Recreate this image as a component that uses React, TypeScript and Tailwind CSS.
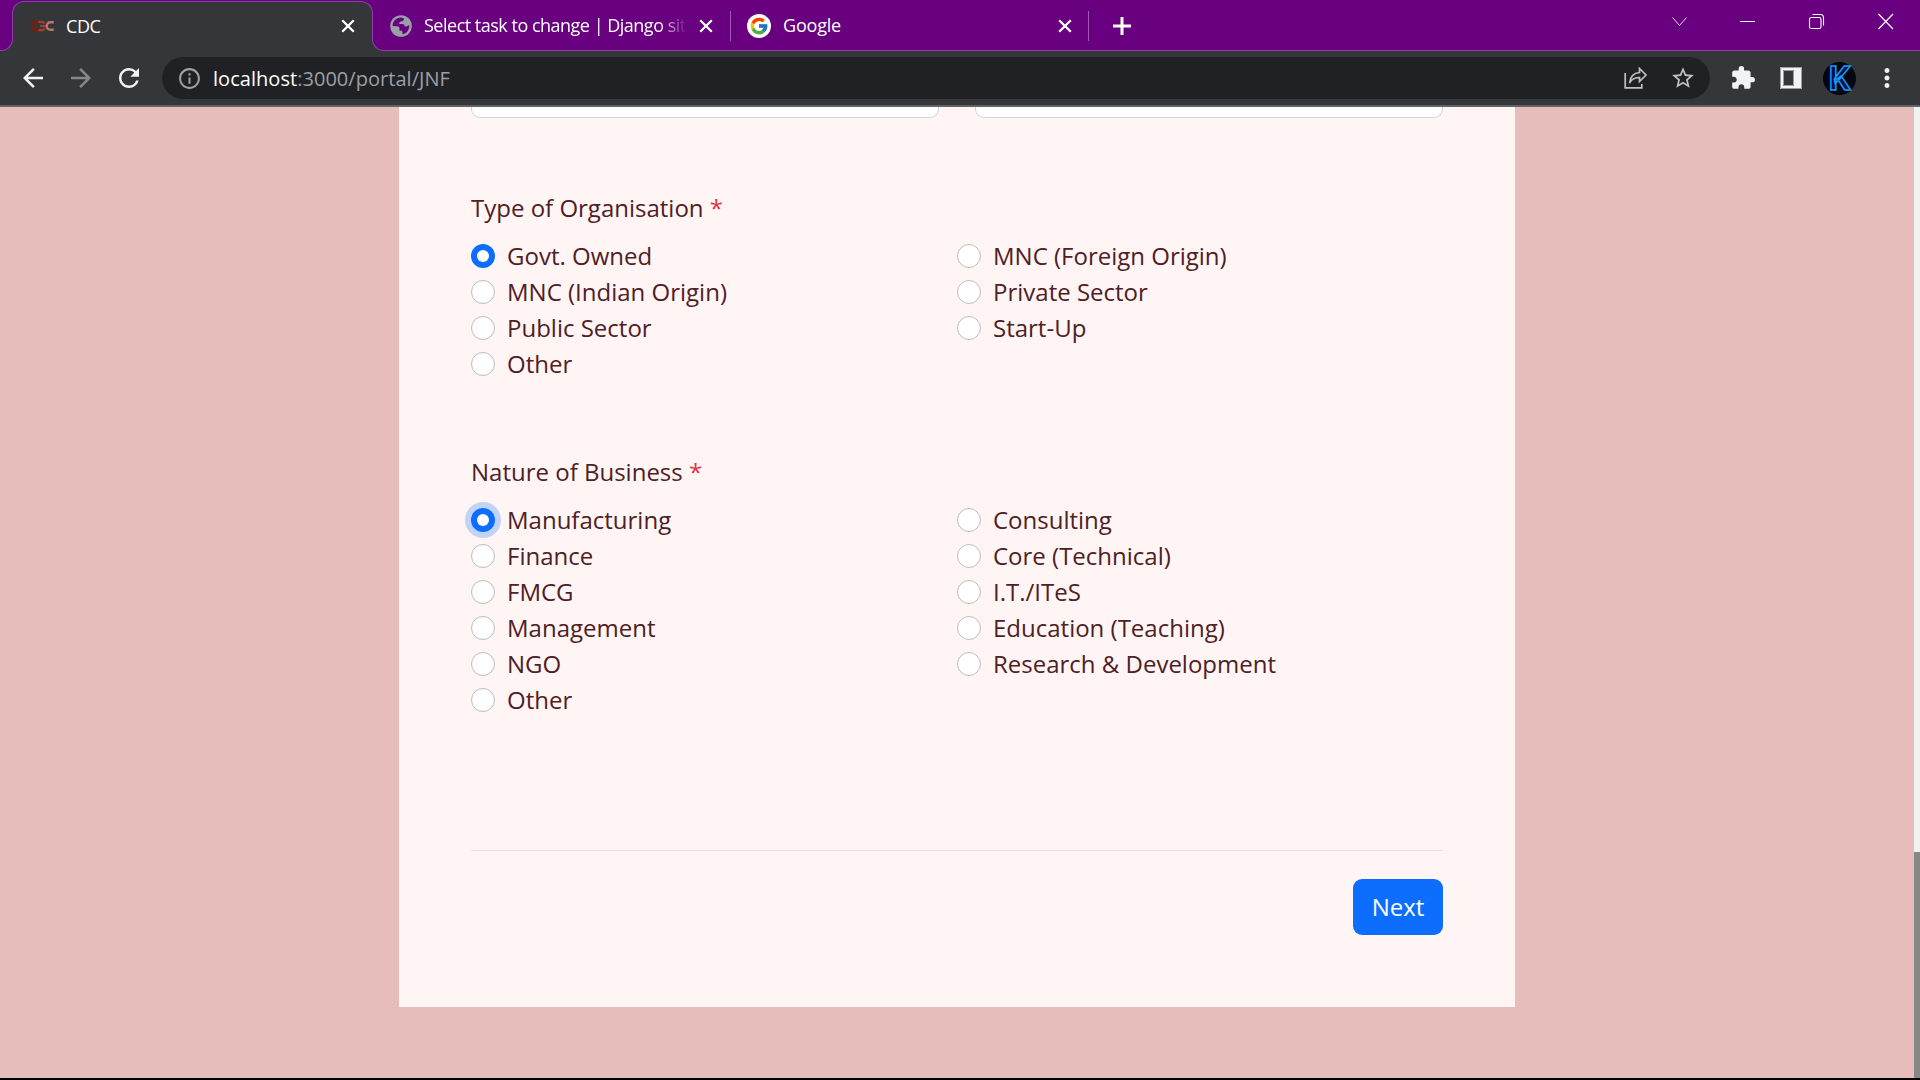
import { MdArrowBack, MdArrowForward, MdRefresh, MdInfoOutline, MdStarBorder, MdExtension, MdMoreVert } from "react-icons/md";
import { FcGoogle } from "react-icons/fc";

const organisationTypes = [
  "Govt. Owned",
  "MNC (Foreign Origin)",
  "MNC (Indian Origin)",
  "Private Sector",
  "Public Sector",
  "Start-Up",
  "Other",
];

const businessTypes = [
  "Manufacturing",
  "Consulting",
  "Finance",
  "Core (Technical)",
  "FMCG",
  "I.T./ITeS",
  "Management",
  "Education (Teaching)",
  "NGO",
  "Research & Development",
  "Other",
];

function CloseIcon() {
  return (
    <svg width="14" height="14" viewBox="0 0 14 14" fill="none" stroke="#fff" strokeWidth="2.3" className="shrink-0">
      <path d="M1.2 1.2 12.8 12.8M12.8 1.2 1.2 12.8" />
    </svg>
  );
}

function ChainFavicon() {
  return (
    <svg width="24" height="12" viewBox="0 0 24 12" fill="none" className="shrink-0">
      <path d="M9.500 3.200A4.200 4.300 0 1 0 9.500 8.800" stroke="#7c1c06" strokeWidth="2.800" />
      <path d="M8.500 1.800h3.500a3 3 0 0 1 2.500 1.700M8.500 10.200h3.500a3 3 0 0 0 2.500-1.700M10 6h5.500" stroke="#a3402c" strokeWidth="2.200" />
      <path d="M23.800 2.200H20.500A3.800 3.800 0 0 0 20.500 9.800H23.800" stroke="#b9766a" strokeWidth="2.500" />
    </svg>
  );
}

function GlobeIcon() {
  return (
    <svg width="22" height="22" viewBox="0 0 22 22" className="shrink-0">
      <circle cx="11" cy="11" r="10.800" fill="#9aa0a6" />
      <path
        fill="#680080"
        d="M2.600 11C2.600 6.300 6.200 2.700 11 2.600L14 3.200C14 5 13 6.300 11 6.500C9.500 6.700 9.300 7.500 9.300 9H12.500C14 9 14.700 10 14.700 11.500H16C17.500 11.500 18 10 19.300 10.200C19.600 15 16.300 18.700 12.500 19.300V17.500C12.500 16.300 12 15.800 10.800 15.800H9.500V13.600C9.500 12.200 8.500 11.500 7.200 11.300Z"
      />
    </svg>
  );
}

function TabStrip() {
  return (
    <div className="flex h-[51px] items-start border-b border-[#8f3fa4] bg-[#680080] pl-3 text-[18px] tracking-[-0.2px] text-white">
      <div className="relative mt-px flex h-[50px] w-[361px] shrink-0 items-center rounded-t-[12px] border border-b-0 border-[#8f3fa4] bg-[#35363a] pl-[17px] pr-[17px] pb-px">
        <span className="absolute -left-[13px] bottom-0 h-[13px] w-[13px] bg-[#35363a]">
          <span className="block h-full w-full rounded-br-[12px] border-b border-r border-[#8f3fa4] bg-[#680080]" />
        </span>
        <span className="absolute -right-[13px] bottom-0 h-[13px] w-[13px] bg-[#35363a]">
          <span className="block h-full w-full rounded-bl-[12px] border-b border-l border-[#8f3fa4] bg-[#680080]" />
        </span>
        <ChainFavicon />
        <span className="ml-3 grow tracking-[-0.4px]">CDC</span>
        <CloseIcon />
      </div>
      <div className="flex h-[51px] w-[358px] shrink-0 items-center pl-[17px]">
        <GlobeIcon />
        <span className="ml-3 w-[263px] whitespace-nowrap tracking-[-0.5px] [mask-image:linear-gradient(to_right,black_89%,transparent_100%)]">
          Select task to change | Django sit
        </span>
        <span className="ml-3">
          <CloseIcon />
        </span>
        <span className="ml-auto h-[30px] w-px bg-[#9d5bae]" />
      </div>
      <div className="flex h-[51px] w-[358px] shrink-0 items-center pl-4">
        <span className="flex size-6 items-center justify-center rounded-full bg-white">
          <FcGoogle size={20} />
        </span>
        <span className="ml-3 grow">Google</span>
        <CloseIcon />
        <span className="ml-4 h-[30px] w-px bg-[#9d5bae]" />
      </div>
      <svg width="18" height="18" viewBox="0 0 18 18" stroke="#fff" strokeWidth="3" className="ml-[24px] mt-[17px]">
        <path d="M9 0v18M0 9h18" />
      </svg>
      <div className="ml-auto mr-[26px] flex gap-[53px] pt-[13px]">
        <svg width="16" height="17" viewBox="0 0 16 17" fill="none" stroke="#e6d5ea" strokeWidth="1">
          <path d="m1.500 4.500 7 8 7-8" />
        </svg>
        <svg width="16" height="17" viewBox="0 0 16 17" stroke="#fff" strokeWidth="1">
          <path d="M0 8.500h15" />
        </svg>
        <svg width="16" height="17" viewBox="0 0 16 17" fill="none" stroke="#fff" strokeWidth="1.1">
          <rect x=".5" y="4.500" width="11.500" height="11" rx="1.800" />
          <path d="M3.500 1.500H11.500a3 3 0 0 1 3 3V12.500" />
        </svg>
        <svg width="16" height="17" viewBox="0 0 16 17" stroke="#fff" strokeWidth="1.2">
          <path d="m.5 1 14.500 15m0-15-14.500 15" />
        </svg>
      </div>
    </div>
  );
}

function Toolbar() {
  return (
    <div className="flex h-14 items-start border-b-2 border-[#626367] bg-[#35363a] pl-[18px] pt-[6px]">
      <div className="flex h-[42px] items-center gap-[18px]">
        <MdArrowBack size={30} color="#f1f3f4" />
        <MdArrowForward size={30} color="#85878a" />
        <MdRefresh size={30} color="#f1f3f4" />
      </div>
      <div className="ml-[18px] flex h-[42px] w-[1548px] items-center rounded-full bg-[#202124] pl-[15px] pr-[14px] text-[20px] text-[#9aa0a6]">
        <MdInfoOutline size={25} color="#9aa0a6" />
        <span className="ml-[11px] grow pt-[2px] tracking-[0.04px]">
          <span className="text-white">localhost</span>:3000/portal/JNF
        </span>
        <svg width="24" height="22" viewBox="0 0 24 22" fill="none" stroke="#bdc1c6" strokeWidth="1.700" className="mr-[22px]">
          <path d="M1.200 6v14.800h16.600V17" />
          <path d="M15.500 1.500 22 8l-6.500 6.500v-4c-4 0-7.500 1-10 5.500.8-6 4-10 10-10.500z" />
        </svg>
        <MdStarBorder size={26} color="#bdc1c6" />
      </div>
      <div className="flex h-[42px] items-center">
        <MdExtension size={26} color="#f1f3f4" className="ml-5" />
        <svg width="22" height="22" viewBox="0 0 22 22" className="ml-6">
          <path fill="#f1f3f4" fillRule="evenodd" d="M0 0h22v22H0zM3 3v16h11V3z" />
          <path fill="none" stroke="#9b9da0" d="M.5 .5h21v21H.5zM3.500 3.500h10v15h-10z" />
        </svg>
        <span className="ml-[21px] flex size-[33px] items-center justify-center rounded-full bg-[#020613]">
          <span className="font-[Roboto,sans-serif] text-[34px] leading-[33px] font-bold text-[#04104a] [-webkit-text-stroke:1.5px_#159bf5]">
            K
          </span>
        </span>
        <MdMoreVert size={30} color="#f1f3f4" className="ml-4" />
      </div>
    </div>
  );
}

function Radio({ label, checked, focused }: { label: string; checked?: boolean; focused?: boolean }) {
  return (
    <label className="flex h-9 items-center gap-3">
      <span
        className={
          checked
            ? focused
              ? "flex size-6 shrink-0 items-center justify-center rounded-full bg-[#0d6efd] ring-6 ring-[#c2d4f6]"
              : "flex size-6 shrink-0 items-center justify-center rounded-full bg-[#0d6efd]"
            : "size-6 shrink-0 rounded-full border border-[#bfbcbc] bg-white"
        }
      >
        {checked && <span className="size-3 rounded-full bg-white" />}
      </span>
      <span>{label}</span>
    </label>
  );
}

function RadioGroup({ title, options, focused }: { title: string; options: string[]; focused?: boolean }) {
  return (
    <section>
      <h2 className="leading-9">
        {title} <span className="text-[#dc3545]">*</span>
      </h2>
      <div className="mt-3 grid grid-cols-2">
        {options.map((label, i) => (
          <Radio key={label} label={label} checked={i === 0} focused={focused && i === 0} />
        ))}
      </div>
    </section>
  );
}

function Field() {
  return <div className="h-[11px] rounded-b-[9px] border border-t-0 border-[#ced4da] bg-white" />;
}

export default function App() {
  return (
    <div className="flex h-[1080px] w-[1920px] flex-col overflow-hidden font-['Open_Sans',sans-serif]">
      <TabStrip />
      <Toolbar />
      <div className="flex h-[971px] bg-[#e6bdbb]">
        <main className="ml-[399px] h-[900px] w-[1116px] bg-[#fff5f4] px-[72px] text-[24px] text-[#4f2025]">
          <div className="grid grid-cols-2 gap-9">
            <Field />
            <Field />
          </div>
          <div className="mt-[72px]">
            <RadioGroup title="Type of Organisation" options={organisationTypes} />
          </div>
          <div className="mt-[72px]">
            <RadioGroup title="Nature of Business" options={businessTypes} focused />
          </div>
          <div className="mt-[132px] flex justify-end border-t border-[#f0dcdc] pt-7">
            <button className="h-14 w-[90px] rounded-[9px] bg-[#0d6efd] text-white">Next</button>
          </div>
        </main>
        <div className="ml-auto w-[6px] bg-[#f1f1f1] pt-[745px]">
          <div className="h-[226px] bg-[#888888]" />
        </div>
      </div>
      <div className="h-[2px] bg-black" />
    </div>
  );
}
